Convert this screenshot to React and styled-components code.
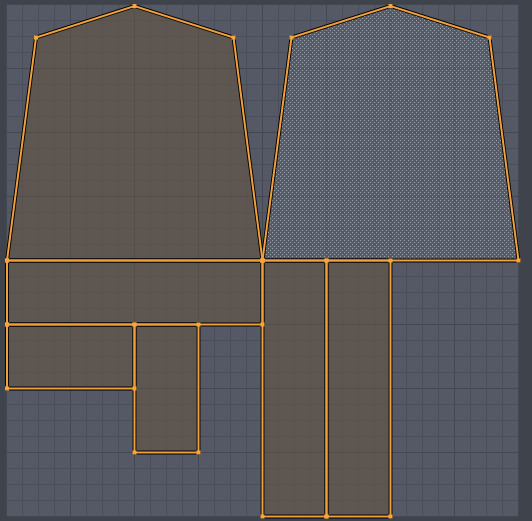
import React from "react";
import styled, { createGlobalStyle } from "styled-components";

const GlobalStyle = createGlobalStyle`
  html, body {
    margin: 0;
    padding: 0;
    background: #3f434c;
    font-family: "DejaVu Sans", sans-serif;
  }
`;

const Frame = styled.div`
  width: 532px;
  height: 521px;
  box-sizing: border-box;
  padding: 5px 0 0 7px;
  background: #3f434c;
  overflow: hidden;
`;

const Canvas = styled.svg`
  display: block;
  width: 511px;
  height: 511px;
  overflow: visible;
  background: #545965;
`;

const EDGE = "#f0a03c";
const VERT = "#f7a63f";

// UV islands, in window pixel coordinates
const faces = [
  { pts: [[7, 260.5], [36, 37.5], [134.5, 6], [233.5, 37.5], [262.5, 260.5]] },
  { pts: [[262.5, 260.5], [291.5, 37.5], [390.5, 6], [489.5, 37.5], [518.5, 260.5]], active: true },
  { pts: [[7, 260.5], [262.5, 260.5], [262.5, 324.5], [7, 324.5]] },
  { pts: [[7, 324.5], [134.5, 324.5], [134.5, 388.5], [7, 388.5]] },
  { pts: [[134.5, 324.5], [198.5, 324.5], [198.5, 452.5], [134.5, 452.5]] },
  { pts: [[262.5, 260.5], [326.5, 260.5], [326.5, 516.5], [262.5, 516.5]] },
  { pts: [[326.5, 260.5], [390.5, 260.5], [390.5, 516.5], [326.5, 516.5]] },
];

const toPoints = (pts) => pts.map((p) => p.join(",")).join(" ");

const GridLines = () => {
  const lines = [];
  for (let k = 0; k <= 32; k++) {
    const major = k % 4 === 0;
    const x = 6.5 + 16 * k;
    const y = 4.5 + 16 * k;
    const stroke = major ? "#43474f" : "#4a4e58";
    lines.push(<line key={"v" + k} x1={x} y1={5} x2={x} y2={516} stroke={stroke} strokeWidth="1" />);
    lines.push(<line key={"h" + k} x1={7} y1={y} x2={518} y2={y} stroke={stroke} strokeWidth="1" />);
  }
  return <g>{lines}</g>;
};

const App = () => {
  const verts = [];
  faces.forEach((f) => f.pts.forEach((p) => verts.push(p)));
  return (
    <>
      <GlobalStyle />
      <Frame>
        <Canvas viewBox="7 5 511 511" xmlns="http://www.w3.org/2000/svg">
          <defs>
            <pattern id="stipple" width="4" height="4" patternUnits="userSpaceOnUse">
              <rect x="0" y="0" width="1" height="1" fill="#aeb2b9" />
              <rect x="2" y="2" width="1" height="1" fill="#aeb2b9" />
            </pattern>
          </defs>
          <rect x="7" y="5" width="511" height="511" fill="#545965" />
          <GridLines />
          {faces.map((f, i) =>
            f.active ? (
              <g key={i}>
                <polygon points={toPoints(f.pts)} fill="rgba(95,100,112,0.35)" />
                <polygon points={toPoints(f.pts)} fill="url(#stipple)" opacity="0.8" />
              </g>
            ) : (
              <polygon key={i} points={toPoints(f.pts)} fill="rgba(104,84,62,0.5)" />
            )
          )}
          {faces.map((f, i) => (
            <polygon key={"b" + i} points={toPoints(f.pts)} fill="none" stroke="#000" strokeWidth="3.8" strokeLinejoin="miter" />
          ))}
          {faces.map((f, i) => (
            <polygon key={"o" + i} points={toPoints(f.pts)} fill="none" stroke={EDGE} strokeWidth="2" strokeLinejoin="miter" />
          ))}
          {verts.map(([x, y], i) => (
            <rect key={"p" + i} x={x - 2} y={y - 2} width="4" height="4" fill={VERT} />
          ))}
        </Canvas>
      </Frame>
    </>
  );
};

export default App;
